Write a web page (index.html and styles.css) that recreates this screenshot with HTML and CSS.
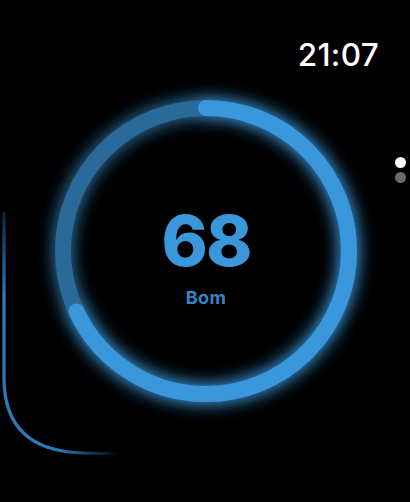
FILE: index.html
```html
<!DOCTYPE html>
<html lang="pt">
<head>
	<meta charset="UTF-8">
	<meta name="viewport" content="width=device-width, user-scalable=no">
	<title>Pontuação</title>
	<link rel="stylesheet" href="styles.css">
</head>
<body>
<div class="watch_wrap">
	<svg class="bezel_line" width="410" height="502" viewBox="0 0 410 502" aria-hidden="true">
		<defs>
			<linearGradient id="bezelGrad" gradientUnits="userSpaceOnUse" x1="0" y1="210" x2="0" y2="456">
				<stop offset="0" stop-color="#0b2236"/>
				<stop offset="0.35" stop-color="#2c7cbc"/>
				<stop offset="1" stop-color="#2a78b6"/>
			</linearGradient>
			<linearGradient id="bezelFade" gradientUnits="userSpaceOnUse" x1="0" y1="0" x2="120" y2="0">
				<stop offset="0" stop-color="#fff"/>
				<stop offset="0.5" stop-color="#fff"/>
				<stop offset="1" stop-color="#000"/>
			</linearGradient>
			<mask id="bezelMask">
				<rect x="0" y="0" width="410" height="502" fill="url(#bezelFade)"/>
			</mask>
		</defs>
		<path d="M4 212 V 378 C 4 428, 32 452, 84 453 L 122 454" fill="none" stroke="url(#bezelGrad)" stroke-width="3.2" mask="url(#bezelMask)"/>
	</svg>

	<div class="header_wrap">
		<span class="time">21:07</span>
	</div>

	<div class="body_wrap">
		<div class="score_ring">
			<svg width="340" height="340" viewBox="0 0 340 340" aria-hidden="true">
				<defs>
					<filter id="glow" x="-25%" y="-25%" width="150%" height="150%">
						<feGaussianBlur in="SourceGraphic" stdDeviation="9" result="blur"/>
						<feComponentTransfer in="blur" result="soft">
							<feFuncA type="linear" slope="1.3"/>
						</feComponentTransfer>
						<feMerge>
							<feMergeNode in="soft"/>
							<feMergeNode in="SourceGraphic"/>
						</feMerge>
					</filter>
				</defs>
				<g filter="url(#glow)">
					<circle cx="170" cy="170" r="143" fill="none" stroke="#296a99" stroke-width="16"/>
					<circle cx="170" cy="170" r="143" fill="none" stroke="#3a97dc" stroke-width="16"
						stroke-linecap="round" stroke-dasharray="611 898.5" transform="rotate(-90 170 170)"/>
				</g>
			</svg>
			<div class="score_text">
				<strong class="score_num">68</strong>
				<span class="score_label">Bom</span>
			</div>
		</div>
	</div>

	<ul class="page_dots">
		<li class="dot on"></li>
		<li class="dot"></li>
	</ul>
</div>
</body>
</html>
```
FILE: styles.css
```css
body,div,ul,li,strong,span{margin:0;padding:0}
ul,li{list-style:none}
body{background:#000;font-family:'Inter','Liberation Sans',sans-serif;color:#fff}
.watch_wrap{position:relative;width:410px;height:502px;overflow:hidden;background:#000}
.watch_wrap .bezel_line{position:absolute;left:0;top:0}
.watch_wrap .header_wrap{display:flex;justify-content:flex-end;padding:36px 31px 0 0;height:42px}
.watch_wrap .header_wrap .time{font-size:31.5px;font-weight:500;line-height:38px;letter-spacing:0.3px;color:#fff}
.watch_wrap .body_wrap{display:flex;justify-content:center;padding:3px 0 0 2px}
.watch_wrap .body_wrap .score_ring{position:relative;width:340px;height:340px}
.watch_wrap .body_wrap .score_ring svg{display:block}
.watch_wrap .body_wrap .score_text{position:absolute;left:0;top:0;right:0;bottom:0;display:flex;flex-direction:column;align-items:center;justify-content:center;padding-top:12px}
.watch_wrap .body_wrap .score_num{font-size:70px;font-weight:800;line-height:70px;letter-spacing:-2px;color:#3a97dc}
.watch_wrap .body_wrap .score_label{margin-top:12px;font-size:18px;font-weight:700;line-height:20px;letter-spacing:0.3px;color:#3585c6}
.watch_wrap .page_dots{position:absolute;right:4px;top:157px;display:flex;flex-direction:column;gap:4px}
.watch_wrap .page_dots .dot{width:11px;height:11px;border-radius:50%;background:#6b6b6b}
.watch_wrap .page_dots .dot.on{background:#fff}
```
